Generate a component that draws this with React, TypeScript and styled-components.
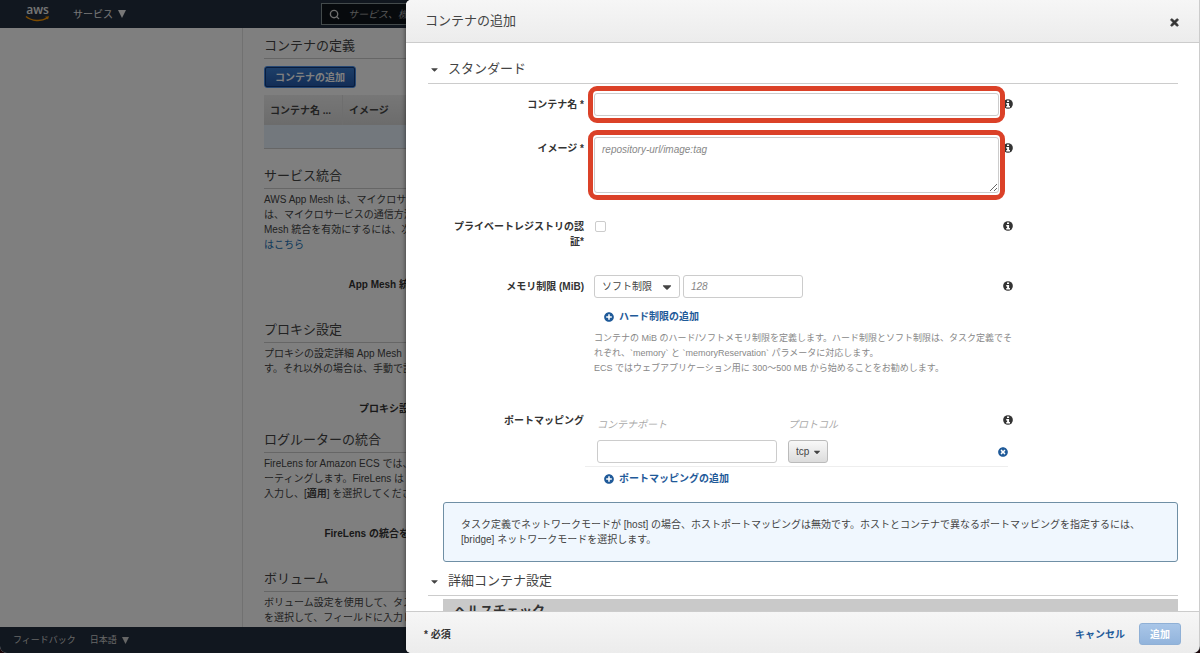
import React from "react";
import styled, { createGlobalStyle, css } from "styled-components";
import { FaCaretDown, FaPlusCircle, FaTimes, FaTimesCircle } from "react-icons/fa";
import { Search } from "lucide-react";

const GlobalStyle = createGlobalStyle`
  *, *::before, *::after { box-sizing: border-box; }
  body {
    margin: 0;
    background: #1a0508;
    color: #444;
    font-family: "Liberation Sans", "Noto Sans CJK JP", sans-serif;
    font-size: 10px;
    line-height: 15px;
  }
  button, input, select, textarea { font: inherit; color: inherit; margin: 0; }
  h1, h2, h3, p { margin: 0; font-weight: 400; }
`;

/* ---------- console page ---------- */

const Shell = styled.div`
  position: relative;
  display: flex;
  flex-direction: column;
  height: 100vh;
  overflow: hidden;
  border-radius: 0 0 7px 7px;
  background: #fff;
`;

const NavBar = styled.header`
  display: flex;
  align-items: center;
  flex: none;
  height: 28px;
  padding-left: 25px;
  background: #232f3e;
  color: #fff;
`;

const Logo = styled.a`
  display: flex;
  flex-direction: column;
  align-items: center;
  width: 25px;
  padding-bottom: 2px;
  color: #eee;
  font: 600 12px/10px "Open Sans", sans-serif;
  text-decoration: none;
`;

const BarButton = styled.button<{ $small?: boolean }>`
  display: flex;
  align-items: center;
  gap: 5px;
  padding: 0;
  border: 0;
  background: none;
  color: ${(p) => (p.$small ? "#ccc" : "#eee")};
  font-size: ${(p) => (p.$small ? 9 : 10)}px;
`;

const ServicesSlot = styled.div`
  width: 271px;
  padding-left: 23px;
`;

const SearchBox = styled.label`
  display: flex;
  align-items: center;
  gap: 8px;
  flex: 1;
  height: 22px;
  margin-right: 200px;
  padding-left: 7px;
  border: 1px solid #879596;
  background: #0f141a;
  color: #ddd;
`;

const SearchInput = styled.input`
  flex: 1;
  min-width: 0;
  padding: 0;
  border: 0;
  background: none;
  &::placeholder { color: #aaa; font-style: italic; opacity: 1; }
`;

const Columns = styled.div`
  display: flex;
  flex: 1;
  min-height: 0;
`;

const Sidebar = styled.aside`
  flex: none;
  width: 243px;
  border-right: 1px solid #e2e2e2;
`;

const Content = styled.main`
  flex: 1;
  min-width: 0;
  overflow: hidden;
  padding: 8px 21px 0;
  white-space: nowrap;
`;

const PageHeading = styled.h2`
  padding-bottom: 2px;
  border-bottom: 1px solid #ccc;
  font-size: 13px;
  line-height: 20px;
`;

const PrimaryButton = styled.button`
  display: block;
  height: 22px;
  margin: 7px 0;
  padding: 0 10px;
  border: 1px solid #4a8ee6;
  border-radius: 3px;
  outline: 1px solid #123a7c;
  outline-offset: -2px;
  background: linear-gradient(#3c80d4, #2459ac);
  color: #fff;
  font-weight: 700;
`;

const ContainerTable = styled.table`
  width: 100%;
  table-layout: fixed;
  border-collapse: separate;
  border-spacing: 0;
  th {
    height: 30px;
    padding: 0 6px;
    border-right: 1px solid #ddd;
    background: linear-gradient(#eee, #d8d8d8);
    text-align: left;
  }
  th:first-child { width: 79px; }
  td {
    height: 24px;
    padding: 0;
    border-bottom: 1px solid #ccc;
    background: #e6f0fa;
  }
`;

const Copy = styled.p`
  margin-top: 3px;
`;

const Setting = styled.div`
  width: 195px;
  padding: 25px 0 28px;
  color: #333;
  font-weight: 700;
  text-align: right;
`;

const PageSection = styled.section<{ $gap: number }>`
  margin-top: ${(p) => p.$gap}px;
`;

const TextLink = styled.a`
  color: #146eb4;
  text-decoration: none;
`;

const FooterBar = styled.footer`
  display: flex;
  align-items: center;
  flex: none;
  gap: 14px;
  height: 26px;
  padding-left: 13px;
  background: #232f3e;
`;

const Shade = styled.div`
  position: absolute;
  inset: 0;
  background: rgba(0, 0, 0, 0.5);
`;

/* ---------- side panel ---------- */

const Panel = styled.div`
  position: absolute;
  inset: 0 0 0 406px;
  display: flex;
  flex-direction: column;
  overflow: hidden;
  border-right: 1px solid #ccc;
  border-radius: 5px 0 7px 5px;
  background: #fff;
  box-shadow: 0 0 5px rgba(0, 0, 0, 0.6);
`;

const PanelHeader = styled.header`
  display: flex;
  align-items: center;
  justify-content: space-between;
  flex: none;
  height: 43px;
  padding: 0 19px;
  border-bottom: 1px solid #ccc;
  background: linear-gradient(#f6f6f6, #ececec);
`;

const PanelTitle = styled.h1`
  font-size: 13px;
  line-height: 20px;
`;

const IconButton = styled.button<{ $blue?: boolean }>`
  display: flex;
  align-items: center;
  padding: 0;
  border: 0;
  background: none;
  color: ${(p) => (p.$blue ? "#1f5a99" : "#333")};
`;

const CloseButton = styled(IconButton)`
  padding-top: 3px;
`;

const PanelBody = styled.div`
  flex: 1;
  min-height: 0;
  overflow-y: auto;
  scrollbar-width: none;
  padding: 0 21px 0 22px;
`;

const SectionToggle = styled.h2<{ $top: number }>`
  display: flex;
  padding: ${(p) => p.$top}px 0 4px;
  border-bottom: 1px solid #ccc;
  font-size: 13px;
  button {
    display: flex;
    align-items: center;
    gap: 8px;
    padding: 0 0 0 1px;
    border: 0;
    background: none;
    line-height: 20px;
  }
`;

const Row = styled.div<{ $gap: number }>`
  display: grid;
  grid-template-columns: 162px minmax(0, 54%) 10px;
  column-gap: 4px;
  align-items: start;
  margin-top: ${(p) => p.$gap}px;
`;

const RowLabel = styled.label`
  padding: 4px 6px 0 20px;
  color: #333;
  font-weight: 700;
  text-align: right;
`;

const InfoButton = styled(IconButton)`
  height: 16px;
  margin-top: 3px;
`;

const Highlight = styled.div`
  position: relative;
  z-index: 1;
  display: flex;
  &::after {
    content: "";
    position: absolute;
    inset: -7px -6px;
    border: 5px solid #db4128;
    border-radius: 9px;
    pointer-events: none;
  }
`;

const field = css`
  border: 1px solid #ccc;
  border-radius: 3px;
  background: #fff;
  padding: 0 7px;
  &::placeholder { color: #888; font-style: italic; opacity: 1; }
`;

const TextField = styled.input<{ $width: string }>`
  ${field}
  width: ${(p) => p.$width};
  height: 23px;
`;

const TextArea = styled.textarea`
  ${field}
  display: block;
  width: 100%;
  height: 56px;
  padding: 4px 7px;
  resize: vertical;
`;

const Tick = styled.input`
  appearance: none;
  width: 11px;
  height: 11px;
  margin: 6px 0 0 1px;
  border: 1px solid #ccc;
  border-radius: 2px;
  background: #fff;
`;

const SelectWrap = styled.div<{ $width: number }>`
  position: relative;
  width: ${(p) => p.$width}px;
  svg {
    position: absolute;
    inset: 0 6px 0 auto;
    margin: auto 0;
    pointer-events: none;
  }
`;

const Select = styled.select<{ $raised?: boolean }>`
  appearance: none;
  width: 100%;
  height: 23px;
  padding: 0 7px;
  border: 1px solid ${(p) => (p.$raised ? "#bbb" : "#ccc")};
  border-radius: 3px;
  background: ${(p) => (p.$raised ? "linear-gradient(#f8f8f8, #dcdcdc)" : "#fff")};
`;

const Inline = styled.div`
  display: flex;
  gap: 3px;
`;

const AddButton = styled.button<{ $gap: number }>`
  display: flex;
  align-items: center;
  gap: 5px;
  margin-top: ${(p) => p.$gap}px;
  padding: 0 0 0 10px;
  border: 0;
  background: none;
  color: #1f5a99;
  font-weight: 700;
`;

const Help = styled.p`
  margin-top: 7px;
  color: #888;
  font-size: 9px;
  white-space: nowrap;
`;

const PortGrid = styled.div`
  display: grid;
  grid-template-columns: 180px 1fr auto;
  gap: 8px 11px;
  align-items: center;
  margin: 0 -9px 0 -9px;
  padding: 8px 0 3px 12px;
  border-bottom: 1px solid #eee;
`;

const ColumnLabel = styled.label`
  color: #aaa;
  font-style: italic;
`;

const Notice = styled.p`
  margin: 16px 0 0 15px;
  padding: 14px 17px;
  border: 1px solid #6f8fa5;
  border-radius: 3px;
  background: #f0f7fe;
`;

const SubHeading = styled.h3`
  margin: 3px 0 0 15px;
  padding: 2px 11px;
  background: #c9c9c9;
  color: #333;
  font-size: 13px;
  font-weight: 700;
  line-height: 20px;
`;

const PanelFooter = styled.footer`
  display: flex;
  align-items: center;
  flex: none;
  height: 42px;
  padding: 3px 18px 0;
  border-top: 1px solid #ccc;
  background: linear-gradient(#f6f6f6, #ececec);
`;

const Required = styled.strong`
  flex: 1;
  color: #333;
`;

const CancelButton = styled.button`
  margin-right: 14px;
  padding: 0;
  border: 0;
  background: none;
  color: #1f5a99;
  font-weight: 700;
`;

const SubmitButton = styled.button`
  height: 22px;
  padding: 0 10px;
  border: 1px solid #8fb0d6;
  border-radius: 3px;
  background: linear-gradient(#a9c6e8, #92b4dc);
  color: #fff;
  font-weight: 700;
`;

function Triangle({ size }: { size: number }) {
  return (
    <svg width={size} height={size} viewBox="0 0 8 8" aria-hidden="true">
      <path d="M0 0h8L4 8z" fill="currentColor" />
    </svg>
  );
}

function Info() {
  return (
    <InfoButton type="button" aria-label="情報">
      <svg width="10" height="10" viewBox="0 0 20 20" aria-hidden="true">
        <circle cx="10" cy="10" r="9.700" fill="currentColor" />
        <path d="M8 3h4.200v3.200H8zM6.500 8h5.700v6.200H14V17H6.500v-2.800h1.700v-3.400H6.500z" fill="#fff" />
      </svg>
    </InfoButton>
  );
}

function Page() {
  return (
    <>
      <NavBar>
        <Logo href="#">
          aws
          <svg width="25" height="7" viewBox="0 0 25 7" fill="none" stroke="#f90" aria-hidden="true">
            <path d="M1 1.500C7 6.300 16 6.600 22 3.200" strokeWidth="1.500" />
            <path d="M20 1.800L24 1.300L23 4.500z" fill="#f90" stroke="none" />
          </svg>
        </Logo>
        <ServicesSlot>
          <BarButton type="button">
            サービス
            <Triangle size={8} />
          </BarButton>
        </ServicesSlot>
        <SearchBox>
          <Search size={11} strokeWidth={3} />
          <SearchInput type="search" placeholder="サービス、機能" aria-label="検索" />
        </SearchBox>
      </NavBar>
      <Columns>
        <Sidebar />
        <Content>
          <section>
            <PageHeading>コンテナの定義</PageHeading>
            <PrimaryButton type="button">コンテナの追加</PrimaryButton>
            <ContainerTable>
              <thead>
                <tr>
                  <th>コンテナ名 ...</th>
                  <th>イメージ</th>
                </tr>
              </thead>
              <tbody>
                <tr>
                  <td colSpan={2} />
                </tr>
              </tbody>
            </ContainerTable>
          </section>
          <PageSection $gap={17}>
            <PageHeading>サービス統合</PageHeading>
            <Copy>
              AWS App Mesh は、マイクロサー
              <br />
              は、マイクロサービスの通信方法
              <br />
              Mesh 統合を有効にするには、次
              <br />
              <TextLink href="#">はこちら</TextLink>
            </Copy>
            <Setting>App Mesh 統合の有効化</Setting>
          </PageSection>
          <PageSection $gap={0}>
            <PageHeading>プロキシ設定</PageHeading>
            <Copy>
              プロキシの設定詳細 App Mesh
              <br />
              す。それ以外の場合は、手動で設
            </Copy>
            <Setting>プロキシ設定の有効化</Setting>
          </PageSection>
          <PageSection $gap={-14}>
            <PageHeading>ログルーターの統合</PageHeading>
            <Copy>
              FireLens for Amazon ECS では、
              <br />
              ーティングします。FireLens は
              <br />
              入力し、[<strong>適用</strong>] を選択してくださ
            </Copy>
            <Setting>FireLens の統合を有効にする</Setting>
          </PageSection>
          <PageSection $gap={0}>
            <PageHeading>ボリューム</PageHeading>
            <Copy>
              ボリューム設定を使用して、タス
              <br />
              を選択して、フィールドに入力し
            </Copy>
          </PageSection>
        </Content>
      </Columns>
      <FooterBar>
        <BarButton type="button" $small>
          フィードバック
        </BarButton>
        <BarButton type="button" $small>
          日本語
          <Triangle size={7} />
        </BarButton>
      </FooterBar>
    </>
  );
}

function ContainerPanel() {
  return (
    <Panel role="dialog" aria-labelledby="panel-title">
      <PanelHeader>
        <PanelTitle id="panel-title">コンテナの追加</PanelTitle>
        <CloseButton type="button" aria-label="閉じる">
          <FaTimes size={11} stroke="currentColor" strokeWidth={40} />
        </CloseButton>
      </PanelHeader>
      <PanelBody>
        <SectionToggle $top={16}>
          <button type="button">
            <FaCaretDown size={11} />
            スタンダード
          </button>
        </SectionToggle>
        <Row $gap={9}>
          <RowLabel htmlFor="name">コンテナ名 *</RowLabel>
          <Highlight>
            <TextField id="name" $width="100%" />
          </Highlight>
          <Info />
        </Row>
        <Row $gap={21}>
          <RowLabel htmlFor="image">イメージ *</RowLabel>
          <Highlight>
            <TextArea id="image" placeholder="repository-url/image:tag" />
          </Highlight>
          <Info />
        </Row>
        <Row $gap={22}>
          <RowLabel htmlFor="private">プライベートレジストリの認証*</RowLabel>
          <Tick id="private" type="checkbox" />
          <Info />
        </Row>
        <Row $gap={26}>
          <RowLabel htmlFor="limit">メモリ制限 (MiB)</RowLabel>
          <div>
            <Inline>
              <SelectWrap $width={86}>
                <Select id="limit">
                  <option>ソフト制限</option>
                </Select>
                <FaCaretDown size={14} />
              </SelectWrap>
              <TextField $width="120px" placeholder="128" aria-label="メモリ (MiB)" />
            </Inline>
            <AddButton type="button" $gap={11}>
              <FaPlusCircle size={10} />
              ハード制限の追加
            </AddButton>
            <Help>
              コンテナの MiB のハード/ソフトメモリ制限を定義します。ハード制限とソフト制限は、タスク定義でそ
              <br />
              れぞれ、`memory` と `memoryReservation` パラメータに対応します。
              <br />
              ECS ではウェブアプリケーション用に 300〜500 MB から始めることをお勧めします。
            </Help>
          </div>
          <Info />
        </Row>
        <Row $gap={33}>
          <RowLabel htmlFor="port">ポートマッピング</RowLabel>
          <div>
            <PortGrid>
              <ColumnLabel htmlFor="port">コンテナポート</ColumnLabel>
              <ColumnLabel htmlFor="protocol">プロトコル</ColumnLabel>
              <span />
              <TextField id="port" $width="100%" />
              <SelectWrap $width={40}>
                <Select id="protocol" $raised>
                  <option>tcp</option>
                </Select>
                <FaCaretDown size={10} />
              </SelectWrap>
              <IconButton type="button" $blue aria-label="削除">
                <FaTimesCircle size={10} />
              </IconButton>
            </PortGrid>
            <AddButton type="button" $gap={4}>
              <FaPlusCircle size={10} />
              ポートマッピングの追加
            </AddButton>
          </div>
          <Info />
        </Row>
        <Notice>
          タスク定義でネットワークモードが [host] の場合、ホストポートマッピングは無効です。ホストとコンテナで異なるポートマッピングを指定するには、[bridge] ネットワークモードを選択します。
        </Notice>
        <SectionToggle $top={9}>
          <button type="button">
            <FaCaretDown size={11} />
            詳細コンテナ設定
          </button>
        </SectionToggle>
        <SubHeading>ヘルスチェック</SubHeading>
      </PanelBody>
      <PanelFooter>
        <Required>* 必須</Required>
        <CancelButton type="button">キャンセル</CancelButton>
        <SubmitButton type="button">追加</SubmitButton>
      </PanelFooter>
    </Panel>
  );
}

export default function App() {
  return (
    <>
      <GlobalStyle />
      <Shell>
        <Page />
        <Shade />
        <ContainerPanel />
      </Shell>
    </>
  );
}
